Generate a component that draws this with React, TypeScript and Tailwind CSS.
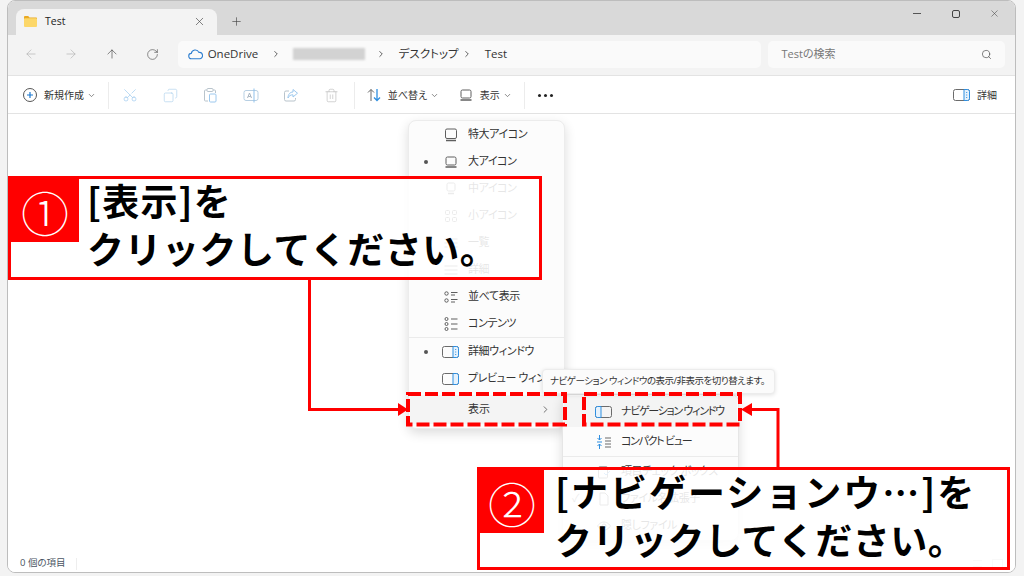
import type { ReactNode } from 'react'
import { ArrowLeft, ArrowRight, ArrowUp, ChevronDown, ChevronRight, Copy, Plus, RotateCw, Scissors, Search, Trash2, X } from 'lucide-react'

const FONT = "font-['Open_Sans','Noto_Sans_CJK_JP',sans-serif] [font-feature-settings:'palt']"

// ── 小さいアイコン ─────────────────────────────────────
function Svg({ children, size = 16 }: { children: ReactNode; size?: number }) {
  return (
    <svg width={size} height={size} viewBox="0 0 16 16" fill="none" stroke="#5f5f5f" strokeWidth="1" className="shrink-0">
      {children}
    </svg>
  )
}

const Monitor = () => <Svg><rect x="2.500" y="2" width="11" height="9.500" rx="1.500" /><path d="M3 13.500h10" strokeWidth="1.500" /></Svg>
const MonitorSm = () => <Svg><rect x="3" y="3" width="10" height="8" rx="1.500" /><path d="M2.500 13h11" strokeWidth="1.500" /></Svg>
const MonitorMd = () => <Svg><rect x="4" y="2" width="8" height="8" rx="1.500" /><path d="M5 12.500h6" strokeWidth="1.500" /></Svg>
const Grid = () => <Svg><rect x="2.500" y="2.500" width="4" height="4" rx="1" /><rect x="9.500" y="2.500" width="4" height="4" rx="1" /><rect x="2.500" y="9.500" width="4" height="4" rx="1" /><rect x="9.500" y="9.500" width="4" height="4" rx="1" /></Svg>
const ListIcon = () => <Svg><path d="M1.500 4h3M1.500 8h3M1.500 12h3M6.500 4h8M6.500 8h8M6.500 12h8" /></Svg>
const Lines = () => <Svg><path d="M1.500 4h13M1.500 8h13M1.500 12h13" /></Svg>
const Tiles = () => <Svg><circle cx="3.500" cy="4.500" r="1.700" /><circle cx="3.500" cy="11.500" r="1.700" /><path d="M8 3.500h6.500M8 6h4M8 10.500h6.500M8 13h4" /></Svg>
const Content = () => <Svg><circle cx="3.500" cy="3" r="1.500" /><circle cx="3.500" cy="8" r="1.500" /><circle cx="3.500" cy="13" r="1.500" /><path d="M8 3h6.500M8 8h6.500M8 13h6.500" /></Svg>

function Pane({ side, dots = false }: { side: 'left' | 'right'; dots?: boolean }) {
  return (
    <svg width="18" height="14" viewBox="0 0 18 14" fill="none" className="shrink-0">
      <rect x="0.500" y="1.500" width="16" height="11" rx="2" stroke="#6b6b6b" />
      {side === 'right'
        ? <path d="M11 1.500h3.500a2 2 0 0 1 2 2v7a2 2 0 0 1-2 2H11z" fill="#e6f2fc" stroke="#2f8fe0" />
        : <path d="M6 1.500H2.500a2 2 0 0 0-2 2v7a2 2 0 0 0 2 2H6z" fill="#e6f2fc" stroke="#2f8fe0" />}
      {dots && <path d="M13.700 4v1M13.700 6.500v1M13.700 9v1" stroke="#2f8fe0" />}
    </svg>
  )
}

function Compact() {
  return (
    <svg width="16" height="16" viewBox="0 0 16 16" fill="none" className="shrink-0">
      <path d="M3.500 1v5M1.500 4l2 2 2-2M3.500 15v-5M1.500 12l2-2 2 2M1 8h5" stroke="#2f8fe0" />
      <path d="M9 4h6M9 7h6M9 10h6M9 13h6" stroke="#6b6b6b" />
    </svg>
  )
}

function CloudIcon() {
  return (
    <svg width="15" height="12" viewBox="0 0 15 12" fill="none" className="shrink-0">
      <path d="M3.600 10.800a2.700 2.700 0 0 1-.3-5.400 4 4 0 0 1 7.600-1 3.200 3.200 0 0 1 .8 6.400z" stroke="#2f7fd0" strokeWidth="1.100" />
    </svg>
  )
}

function Folder() {
  return (
    <svg width="13" height="11" viewBox="0 0 13 11" className="shrink-0">
      <path d="M0 1.200C0 .5.500 0 1.200 0h3l1.300 1.400H12c.6 0 1 .4 1 1V3H0z" fill="#e9a923" />
      <rect y="2.200" width="13" height="8.800" rx="1" fill="#fcd769" />
    </svg>
  )
}

// ── ツールバー ─────────────────────────────────────────
const Sep = () => <div className="w-px h-[27px] bg-[#ececec] shrink-0" />

function GhostBtn({ children }: { children: ReactNode }) {
  return <div className="w-[40.4px] flex justify-center items-center shrink-0">{children}</div>
}

function Toolbar() {
  return (
    <div className="h-[39px] pt-[1px] bg-white border-y border-[#e3e3e3] flex items-center shrink-0 text-[10px] text-[#333]">
      <div className="flex items-center w-[100px] pl-[14px] shrink-0">
        <svg width="16" height="16" viewBox="0 0 16 16" fill="none" className="shrink-0">
          <circle cx="8" cy="8" r="6.500" stroke="#555" />
          <path d="M8 5v6M5 8h6" stroke="#1b78d0" strokeWidth="1.200" />
        </svg>
        <span className="ml-[6px] whitespace-nowrap">新規作成</span>
        <ChevronDown size={9} className="ml-[3px] text-[#666] shrink-0" />
      </div>
      <Sep />
      <div className="flex pl-[0.5px] shrink-0">
        <GhostBtn><Scissors size={16} strokeWidth={1} className="text-[#9cc8ee] -rotate-90" /></GhostBtn>
        <GhostBtn><Copy size={15} strokeWidth={1} className="text-[#a9cdec] -scale-x-100" /></GhostBtn>
        <GhostBtn>
          <svg width="16" height="16" viewBox="0 0 16 16" fill="none">
            <path d="M5 3H3.500a1 1 0 0 0-1 1v9a1 1 0 0 0 1 1H6M11 3h1.500a1 1 0 0 1 1 1v2" stroke="#b9c4cc" />
            <rect x="5" y="1.500" width="6" height="3" rx="1" stroke="#b9c4cc" />
            <rect x="7.500" y="7" width="6.500" height="8" rx="1" stroke="#9cc8ee" />
          </svg>
        </GhostBtn>
        <GhostBtn>
          <svg width="16" height="15" viewBox="0 0 16 15" fill="none">
            <rect x="1" y="2.500" width="14" height="10" rx="2" stroke="#b7cfe3" />
            <path d="M4.500 10l2-5 2 5M5.200 8.500h2.600" stroke="#a9b6c2" />
            <path d="M11 .5v14" stroke="#8fc1ec" />
          </svg>
        </GhostBtn>
        <GhostBtn>
          <svg width="16" height="15" viewBox="0 0 16 15" fill="none">
            <path d="M6 3H3a1.500 1.500 0 0 0-1.500 1.500v7A1.500 1.500 0 0 0 3 13h8a1.500 1.500 0 0 0 1.500-1.500V10" stroke="#b9c4cc" />
            <path d="M10 1.500l4.500 3.700L10 9V6.800C7.500 6.800 6 7.800 5 10c0-3.500 2-6 5-6z" stroke="#9cc8ee" />
          </svg>
        </GhostBtn>
        <GhostBtn><Trash2 size={15} strokeWidth={1} className="text-[#b9b9b9]" /></GhostBtn>
      </div>
      <div className="w-[2px]" />
      <Sep />
      <div className="flex items-center w-[91px] pl-[11px] shrink-0">
        <svg width="16" height="16" viewBox="0 0 16 16" fill="none" className="shrink-0">
          <path d="M5 14V2.500M2 5.500l3-3 3 3" stroke="#666" />
          <path d="M11 2v11.500M8 10.500l3 3 3-3" stroke="#2f8fe0" strokeWidth="1.300" />
        </svg>
        <span className="ml-[6px] whitespace-nowrap">並べ替え</span>
        <ChevronDown size={9} className="ml-[3px] text-[#666] shrink-0" />
      </div>
      <div className="flex items-center w-[78px] pl-[12px] shrink-0">
        <MonitorSm />
        <span className="ml-[6px] whitespace-nowrap">表示</span>
        <ChevronDown size={9} className="ml-[3px] text-[#666] shrink-0" />
      </div>
      <Sep />
      <div className="flex gap-[3px] ml-[13px] shrink-0">
        <div className="size-[3px] rounded-full bg-[#222]" />
        <div className="size-[3px] rounded-full bg-[#222]" />
        <div className="size-[3px] rounded-full bg-[#222]" />
      </div>
      <div className="ml-auto flex items-center pr-[18px] gap-[6px]">
        <Pane side="right" dots />
        <span>詳細</span>
      </div>
    </div>
  )
}

// ── 表示メニュー ───────────────────────────────────────
function MenuRow({ icon, label, dot = false }: { icon: ReactNode; label: string; dot?: boolean }) {
  return (
    <div className="h-[27px] flex items-center text-[11px] tracking-[-0.4px] whitespace-nowrap text-[#333]">
      <div className="w-[33px] flex justify-center shrink-0">
        {dot && <div className="size-[4px] rounded-full bg-[#555]" />}
      </div>
      <div className="w-[18px] flex justify-center shrink-0">{icon}</div>
      <span className="ml-[8px]">{label}</span>
    </div>
  )
}

function ViewMenu() {
  return (
    <div className="absolute left-[408px] top-[120px] w-[157px] h-[309px] bg-[#fcfcfc] rounded-lg border border-[#ececec] shadow-[0_4px_12px_rgba(0,0,0,0.14)]">
      <MenuRow icon={<Monitor />} label="特大アイコン" />
      <MenuRow icon={<MonitorSm />} label="大アイコン" dot />
      <MenuRow icon={<MonitorMd />} label="中アイコン" />
      <MenuRow icon={<Grid />} label="小アイコン" />
      <MenuRow icon={<ListIcon />} label="一覧" />
      <MenuRow icon={<Lines />} label="詳細" />
      <MenuRow icon={<Tiles />} label="並べて表示" />
      <MenuRow icon={<Content />} label="コンテンツ" />
      <div className="h-px bg-[#ebebeb]" />
      <MenuRow icon={<Pane side="right" dots />} label="詳細ウィンドウ" dot />
      <MenuRow icon={<Pane side="right" />} label="プレビュー ウィンドウ" />
      <div className="h-px my-[1px]" />
      <div className="h-[29px] mx-[1px] bg-[#f4f4f4] rounded flex items-center text-[11px] text-[#333]">
        <span className="ml-[58px]">表示</span>
        <ChevronRight size={11} className="ml-auto mr-[12px] text-[#666]" />
      </div>
    </div>
  )
}

function SubMenu() {
  return (
    <div className="absolute left-[562px] top-[394px] w-[177px] h-[147px] bg-[#fcfcfc] rounded-lg border border-[#e6e6e6] shadow-[0_4px_12px_rgba(0,0,0,0.14)] text-[11px] tracking-[-0.4px] text-[#333]">
      <div className="h-[31px] mt-[1px] mx-[1px] bg-[#f4f4f4] rounded flex items-center pl-[31px]">
        <Pane side="left" />
        <span className="ml-[8px] whitespace-nowrap tracking-[-1.300px]">ナビゲーション ウィンドウ</span>
      </div>
      <div className="h-[29px] flex items-center pl-[33px]">
        <Compact />
        <span className="ml-[9px] tracking-[-1.300px]">コンパクト ビュー</span>
      </div>
      <div className="h-px bg-[#ebebeb]" />
      <div className="h-[27px] mt-[1px] flex items-center pl-[33px]">
        <Svg><rect x="2.500" y="3" width="9" height="11" rx="1" /><path d="M8 9l2 2 4-4" stroke="#2f8fe0" /></Svg>
        <span className="ml-[9px]">項目チェック ボックス</span>
      </div>
      <div className="h-[27px] flex items-center pl-[9px]">
        <span className="w-[24px] text-[#666]">✓</span>
        <Svg><path d="M4 2h5l3 3v9H4z" /></Svg>
        <span className="ml-[9px]">ファイル名拡張子</span>
      </div>
      <div className="h-[27px] flex items-center pl-[33px]">
        <Svg><path d="M1.500 8s2.500-4 6.500-4 6.500 4 6.500 4-2.500 4-6.500 4-6.500-4-6.500-4z" /><circle cx="8" cy="8" r="2" /></Svg>
        <span className="ml-[9px]">隠しファイル</span>
      </div>
    </div>
  )
}

// ── 注釈 ───────────────────────────────────────────────
function Callout({ className, num, numClass, textClass, children }: { className: string; num: string; numClass: string; textClass: string; children: ReactNode }) {
  return (
    <div className={`absolute border-[3px] border-[#ff0000] bg-white/[.88] flex items-start [font-feature-settings:normal] font-['Noto_Sans_CJK_JP',sans-serif] ${className}`}>
      <div className={`bg-[#ff0000] flex items-center justify-center text-white text-[48px] leading-none font-light shrink-0 ${numClass}`}>
        {num}
      </div>
      <div className={`text-black text-[37px] leading-[48px] font-semibold whitespace-nowrap ${textClass}`}>
        {children}
      </div>
    </div>
  )
}

function Annotations() {
  return (
    <svg className="absolute left-0 top-0" width="1024" height="576" fill="none">
      <path d="M309.500 279V409.500H402" stroke="#ff0000" strokeWidth="3" />
      <path d="M398 403l10 6.500-10 6.500z" fill="#ff0000" />
      <path d="M778 467V409.500H748" stroke="#ff0000" strokeWidth="3" />
      <path d="M741 409.500l11-6.500v13z" fill="#ff0000" />
      <rect x="408" y="394" width="157" height="30.500" stroke="#ff0000" strokeWidth="4" strokeDasharray="13 4" />
      <rect x="584" y="394" width="156" height="30.500" stroke="#ff0000" strokeWidth="4" strokeDasharray="13 4" />
    </svg>
  )
}

export default function App() {
  return (
    <div className={`relative w-[1024px] h-[576px] overflow-hidden bg-[#f3f3f3] pl-[7px] ${FONT}`}>
      <div className="w-[1009px] h-[573px] border border-[#bdbdbd] rounded-lg overflow-hidden flex flex-col bg-white">
        {/* タブ */}
        <div className="h-[34px] bg-[#d9d9d9] flex items-end shrink-0 pl-[8px]">
          <div className="w-[201px] h-[26px] bg-[#f3f3f3] rounded-t-lg flex items-center pl-[8px] pr-[11px] pb-[1px] text-[10.500px] text-[#222]">
            <Folder />
            <span className="ml-[8px]">Test</span>
            <X size={13} strokeWidth={1.200} className="ml-auto text-[#444]" />
          </div>
          <Plus size={13} strokeWidth={1.200} className="ml-[13px] mb-[7px] text-[#444]" />
          <div className="ml-auto self-start flex items-center pt-[7px] pr-[1px] text-[#444]">
            <div className="w-[39px] flex justify-center"><div className="w-[8px] h-px bg-[#555]" /></div>
            <div className="w-[39px] flex justify-center"><div className="size-[8px] border border-[#444] rounded-[2px]" /></div>
            <div className="w-[39px] flex justify-center"><X size={11} strokeWidth={1.200} /></div>
          </div>
        </div>

        {/* アドレスバー */}
        <div className="h-[40px] pb-[2px] bg-[#f3f3f3] flex items-center shrink-0 pl-[3px] pr-[10px]">
          <div className="w-[40px] flex justify-center"><ArrowLeft size={14} strokeWidth={1} className="text-[#aaa]" /></div>
          <div className="w-[41px] flex justify-center"><ArrowRight size={14} strokeWidth={1} className="text-[#aaa]" /></div>
          <div className="w-[40px] flex justify-center"><ArrowUp size={14} strokeWidth={1.100} className="text-[#444]" /></div>
          <div className="w-[41px] flex justify-center"><RotateCw size={13} strokeWidth={1.100} className="text-[#444]" /></div>
          <div className="ml-[5px] w-[585px] h-[27px] bg-[#fafafa] rounded-[5px] flex items-center pl-[10px] text-[11.500px] text-[#333]">
            <CloudIcon />
            <span className="ml-[5px] w-[48px] whitespace-nowrap">OneDrive</span>
            <ChevronRight size={10} className="ml-[15px] text-[#444]" />
            <div className="ml-[12px] w-[72px] h-[12px] bg-[#d2d2d2] blur-[1px]" />
            <ChevronRight size={10} className="ml-[11px] text-[#444]" />
            <span className="ml-[13px] w-[52px] whitespace-nowrap">デスクトップ</span>
            <ChevronRight size={10} className="ml-[11px] text-[#444]" />
            <span className="ml-[13px]">Test</span>
          </div>
          <div className="ml-[7px] w-[237px] h-[27px] bg-[#fafafa] rounded-[5px] flex items-center px-[13px] text-[11px] text-[#777]">
            <span>Testの検索</span>
            <Search size={11} strokeWidth={1.400} className="ml-auto text-[#444]" />
          </div>
        </div>

        <Toolbar />

        {/* 本文 */}
        <div className="flex-1 bg-white" />

        {/* ステータスバー */}
        <div className="h-[18px] pt-[1px] bg-white flex items-center shrink-0 pl-[12px] pr-[12px] text-[9.500px] text-[#4a5563]">
          <span>0 個の項目</span>
          <div className="ml-[10px] w-px h-[12px] bg-[#eee]" />
          <div className="ml-auto flex items-center gap-[10px]">
            <div className="w-[9px] h-[7px] border-y border-[#ccc]" />
            <div className="w-[11px] h-[9px] border border-[#ccc]" />
          </div>
        </div>
      </div>

      <ViewMenu />
      <SubMenu />

      <div className="absolute left-[542px] top-[369px] w-[233px] h-[25px] bg-[#fbfbfb] border border-[#ececec] rounded shadow-[0_1px_4px_rgba(0,0,0,0.12)] flex items-center pl-[7px] text-[9.500px] tracking-[-0.5px] text-[#333] whitespace-nowrap">
        ナビゲーション ウィンドウの表示/非表示を切り替えます。
      </div>

      <Annotations />

      <Callout className="left-[8px] top-[176px] w-[534px] h-[104px]" num="①" numClass="w-[68px] h-[63px]" textClass="ml-[8px] -mt-[3px]">
        <span className="tracking-[1.200px]">[表示]を</span><br /><span className="tracking-[0.500px]">クリックしてください。</span>
      </Callout>
      <Callout className="left-[477px] top-[467px] w-[533px] h-[103px]" num="②" numClass="w-[64px] h-[63px]" textClass="ml-[11px] -mt-[3px]">
        <span className="tracking-[2px]">[ナビゲーションウ…]を</span><br /><span className="tracking-[0.500px]">クリックしてください。</span>
      </Callout>
    </div>
  )
}
